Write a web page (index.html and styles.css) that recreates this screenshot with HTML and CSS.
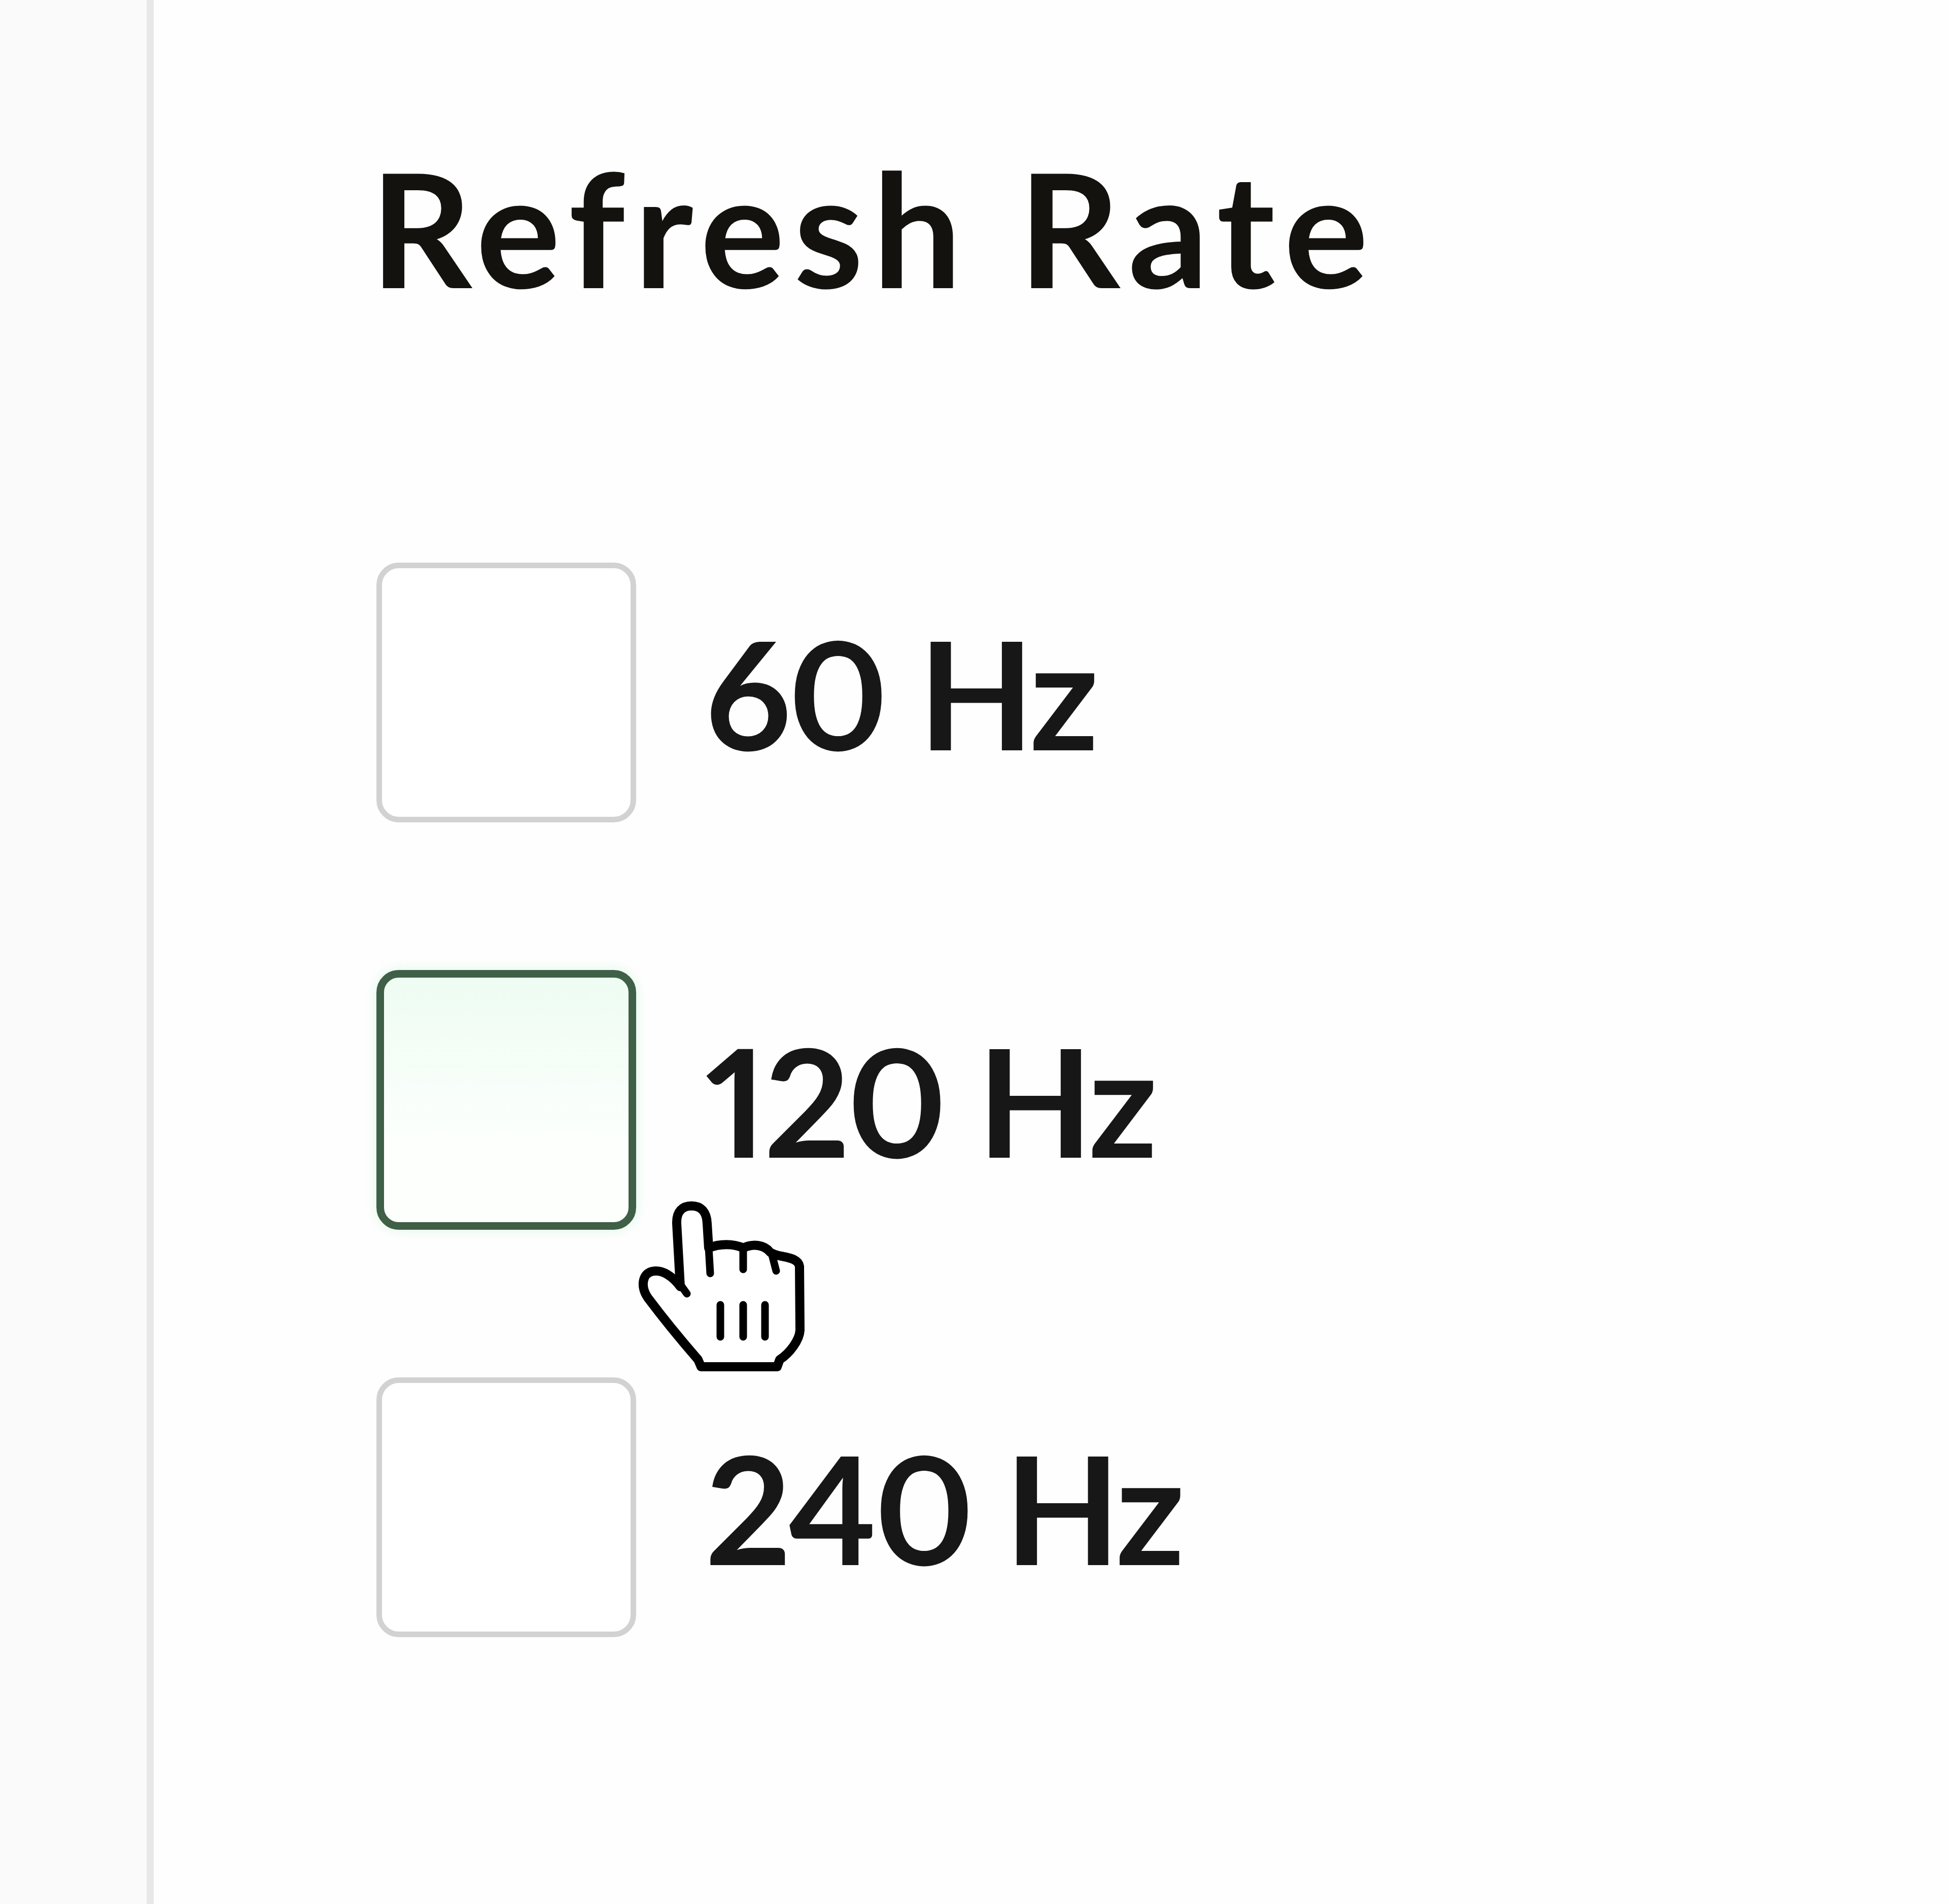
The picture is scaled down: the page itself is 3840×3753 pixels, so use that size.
FILE: index.html
```html
<!DOCTYPE html>
<html lang="en">
<head>
<meta charset="utf-8">
<title>Refresh Rate</title>
<link rel="stylesheet" href="styles.css">
</head>
<body>
<div class="page">
  <aside class="sidebar"></aside>
  <main class="panel">
    <h1 class="title">Refresh Rate</h1>
    <ul class="options">
      <li class="option"><span class="box"></span><span class="label">60 Hz</span></li>
      <li class="option"><span class="box box-hover"></span><span class="label">120 Hz</span></li>
      <li class="option"><span class="box"></span><span class="label">240 Hz</span></li>
    </ul>
  </main>
  <svg class="cursor" viewBox="0 0 360 380" width="360" height="380" aria-hidden="true">
    <path class="hand" d="M84 62 C83 37 96 27 113 27 C131 27 143 37 144 62 L147 110 C168 101 196 101 215 110 C234 101 256 103 268 118 C282 130 322 124 326 146 L327 272 C326 292 306 318 287 330 L282 344 L132 344 L126 330 C100 300 60 252 27 208 C12 186 16 160 36 156 C56 152 76 166 91 186 Z"/>
    <path class="line" d="M147 110 L150 160 M215 112 L215 152 M272 124 L280 155 M84 172 L104 200 M170 222 L170 285 M215 222 L215 285 M258 222 L258 285"/>
  </svg>
</div>
</body>
</html>
```

FILE: styles.css
```css
html, body {
  margin: 0;
  padding: 0;
  background: #fefefe;
}

.page {
  position: relative;
  display: flex;
  min-height: 3753px;
}

.sidebar {
  width: 289px;
  flex: 0 0 289px;
  background: #fafafa;
  border-right: 14px solid #e8e8e8;
}

.panel {
  flex: 1;
  padding: 291px 0 0 439px;
  font-family: Lato, "Open Sans", sans-serif;
}

.title {
  margin: 0 0 0 -12px;
  font-size: 312px;
  line-height: 1;
  font-weight: 700;
  color: #14120f;
  letter-spacing: 18px;
}

.options {
  list-style: none;
  margin: 506px 0 0 0;
  padding: 0;
  display: flex;
  flex-direction: column;
  gap: 291px;
}

.option {
  display: flex;
  align-items: center;
  gap: 136px;
}

.box {
  box-sizing: border-box;
  width: 512px;
  height: 512px;
  border: 11px solid #d2d2d2;
  border-radius: 44px;
  background: #ffffff;
  flex: 0 0 auto;
}

.box-hover {
  border: 15px solid #3f5f47;
  background: linear-gradient(#eefcf2, #fdfffd 70%);
  box-shadow: 0 0 22px rgba(120, 230, 150, 0.25);
}

.label {
  font-size: 296px;
  line-height: 1;
  font-weight: 700;
  color: #171717;
  font-variant-numeric: proportional-nums;
  letter-spacing: -6px;
}

.cursor {
  position: absolute;
  left: 1250px;
  top: 2350px;
}

.cursor .hand {
  fill: #ffffff;
  stroke: #000000;
  stroke-width: 18;
  stroke-linejoin: round;
}

.cursor .line {
  fill: none;
  stroke: #000000;
  stroke-width: 15;
  stroke-linecap: round;
}
```
